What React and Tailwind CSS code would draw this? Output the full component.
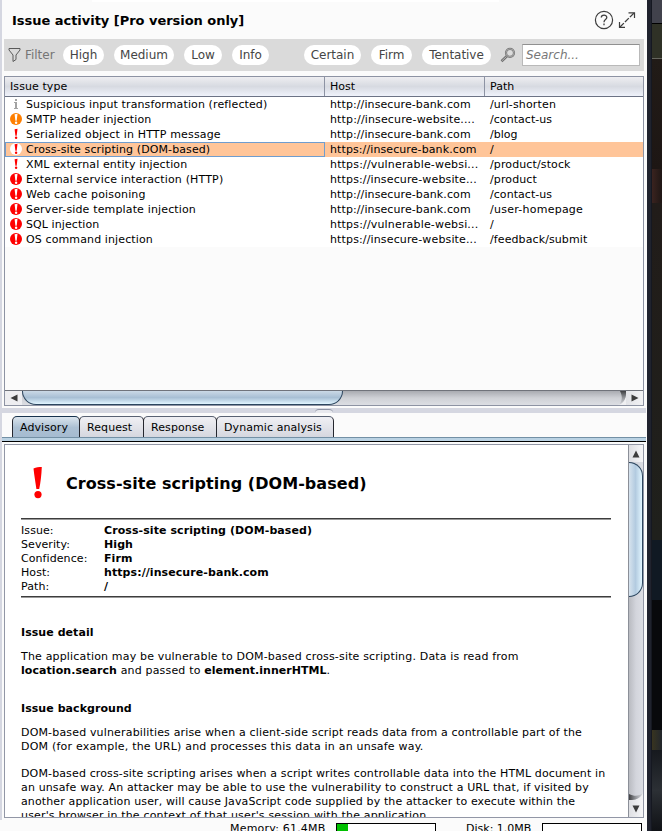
const severityChips = [
  ['High', 'w-[41px]'],
  ['Medium', 'w-[60px]'],
  ['Low', 'w-[38px]'],
  ['Info', 'w-[37px]'],
];
const confidenceChips = [
  ['Certain', 'w-[57px]'],
  ['Firm', 'w-[41px]'],
  ['Tentative', 'w-[69px]'],
];

const rows = [
  ['info', 'Suspicious input transformation (reflected)', 'tracking-[0.12px]', 'http://insecure-bank.com', 'tracking-[0.1px]', '/url-shorten', 'tracking-[0.15px]'],
  ['orange', 'SMTP header injection', 'tracking-[0.14px]', 'http://insecure-website....', 'tracking-[0.15px]', '/contact-us', 'tracking-[0.05px]'],
  ['plain', 'Serialized object in HTTP message', 'tracking-[0.17px]', 'http://insecure-bank.com', 'tracking-[0.1px]', '/blog', 'tracking-normal'],
  ['white', 'Cross-site scripting (DOM-based)', 'tracking-[0.1px]', 'https://insecure-bank.com', 'tracking-[0.1px]', '/', 'tracking-normal'],
  ['plain', 'XML external entity injection', 'tracking-[0.12px]', 'https://vulnerable-websi...', 'tracking-[0.17px]', '/product/stock', 'tracking-[0.12px]'],
  ['red', 'External service interaction (HTTP)', 'tracking-[0.16px]', 'https://insecure-website...', 'tracking-[0.14px]', '/product', 'tracking-[0.12px]'],
  ['red', 'Web cache poisoning', 'tracking-[0.15px]', 'http://insecure-bank.com', 'tracking-[0.1px]', '/contact-us', 'tracking-[0.05px]'],
  ['red', 'Server-side template injection', 'tracking-[0.15px]', 'http://insecure-bank.com', 'tracking-[0.1px]', '/user-homepage', 'tracking-[0.25px]'],
  ['red', 'SQL injection', 'tracking-[0.08px]', 'https://vulnerable-websi...', 'tracking-[0.17px]', '/', 'tracking-normal'],
  ['red', 'OS command injection', 'tracking-[0.12px]', 'https://insecure-website...', 'tracking-[0.14px]', '/feedback/submit', 'tracking-[0.1px]'],
];

const details = [
  ['Issue:', 'Cross-site scripting (DOM-based)'],
  ['Severity:', 'High'],
  ['Confidence:', 'Firm'],
  ['Host:', 'https://insecure-bank.com'],
  ['Path:', '/'],
];

const disc = { orange: '#ff7f00', red: '#ff0000', white: '#ffffff' };

function SeverityIcon({ kind }) {
  if (kind === 'info') {
    return (
      <svg width="12" height="12" viewBox="0 0 12 12" className="shrink-0">
        <path d="M5 1h2v2H5zM4 4h3v6h1v1H4v-1h1V5H4z" fill="#a3a3a3" />
      </svg>
    );
  }
  const mark = kind === 'plain' || kind === 'white' ? '#ff0000' : '#ffffff';
  return (
    <svg width="12" height="12" viewBox="0 0 12 12" className="shrink-0">
      {disc[kind] && <circle cx="6" cy="6" r="6" fill={disc[kind]} />}
      <path d="M4.6 1.2L7.5 0.8L6.7 7.8H5.4z" fill={mark} />
      <circle cx="6.1" cy="9.8" r="1.2" fill={mark} />
    </svg>
  );
}

function Chip({ label, width }) {
  return (
    <span className={'flex h-5 items-center justify-center rounded-full bg-white tracking-[-0.03px] ' + width}>{label}</span>
  );
}

function Arrow({ d }) {
  return (
    <svg width="8" height="8" viewBox="0 0 8 8" className="shrink-0">
      <path d={d} fill="#3c3c3c" />
    </svg>
  );
}

function Tab({ label, active, width }) {
  return (
    <div
      className={
        'h-[22px] rounded-t-[5px] border border-[#25272f] pt-[4px] pl-[7px] tracking-[0.08px] whitespace-nowrap ' +
        width +
        (active
          ? ' border-b-0 bg-linear-to-b from-[#dbe5ed] via-[#abc0d3] to-[#a5bbd0] border-t-[#17334d]'
          : ' -ml-px bg-linear-to-b from-[#f0f0f4] to-[#d5d7df] border-t-[#596273]')
      }
    >
      {label}
    </div>
  );
}

function FilterBar() {
  return (
    <div className="mr-[3px] ml-0.5 flex h-8 shrink-0 items-center bg-[#dadada] pl-1 text-[12px] text-[#454545]">
      <svg width="13" height="16" viewBox="0 0 13 16" className="mr-[4px]">
        <path d="M1 1.5h11v1.5L8 8v4.5L5 14.5V8L1 3z" fill="none" stroke="#5a5a5a" strokeWidth="1" />
      </svg>
      <span className="w-[38px] tracking-[-0.03px] text-[#757575]">Filter</span>
      <div className="flex gap-[10px]">
        {severityChips.map(([label, width]) => (
          <Chip key={label} label={label} width={width} />
        ))}
      </div>
      <div className="ml-[35px] flex gap-[10px]">
        {confidenceChips.map(([label, width]) => (
          <Chip key={label} label={label} width={width} />
        ))}
      </div>
      <svg width="16" height="16" viewBox="0 0 16 16" className="ml-[9px]">
        <path d="M7.5 8.5L1.5 14.2" stroke="#6f6f6f" strokeWidth="2.6" />
        <path d="M7.2 8.8L1.8 13.9" stroke="#c8c8c8" strokeWidth="0.8" />
        <circle cx="10" cy="5.8" r="4" fill="#dcdcdc" stroke="#777" strokeWidth="2.2" />
        <circle cx="10" cy="5.8" r="4" fill="none" stroke="#b8b8b8" strokeWidth="0.7" />
      </svg>
      <div className="ml-[6px] flex h-[22px] w-[118px] items-center border border-[#b9b9b9] border-t-[#909090] bg-white pl-[3px] text-[#777] italic">
        Search...
      </div>
    </div>
  );
}

function IssueTable() {
  return (
    <div className="mt-[5px] mr-[3px] ml-0.5 flex h-[330px] shrink-0 flex-col border border-[#8d93a3] bg-[#fbfbfb]">
      <div className="flex h-5 shrink-0 items-center border-b border-[#6c7385] bg-linear-to-b from-[#eeeef1] via-[#d7dae1] to-[#eff2fb]">
        <div className="flex h-full w-80 items-center border-r border-[#8d93a3] pl-[5px] tracking-[0.08px]">Issue type</div>
        <div className="flex h-full w-40 items-center border-r border-[#8d93a3] pl-[5px]">Host</div>
        <div className="pl-[5px]">Path</div>
      </div>
      {rows.map(([kind, type, typeTracking, host, hostTracking, path, pathTracking]) => (
        <div key={type} className={'flex h-[15px] shrink-0 ' + (kind === 'white' ? 'bg-[#ffc599]' : 'bg-white')}>
          <div
            className={
              'flex h-full w-80 shrink-0 gap-1 border pl-1 leading-[13px] ' +
              (kind === 'white' ? 'border-[#6f9dcf]' : 'border-transparent')
            }
          >
            <SeverityIcon kind={kind} />
            <span className={'whitespace-nowrap ' + typeTracking}>{type}</span>
          </div>
          <div className={'w-40 shrink-0 pl-[5px] leading-[15px] whitespace-nowrap ' + hostTracking}>{host}</div>
          <div className={'pl-[5px] leading-[15px] whitespace-nowrap ' + pathTracking}>{path}</div>
        </div>
      ))}
      <div className="mt-auto flex h-[15px] border-t border-[#70737b] bg-linear-to-b from-[#a9abb1] via-[#cfd1d6] to-[#dcdee3]">
        <div className="flex w-[17px] items-center justify-center bg-[#eeeef1]">
          <Arrow d="M7.5 0.5v7L0.5 4z" />
        </div>
        <div className="h-[14px] w-[321px] rounded-b-[14px] border border-t-0 border-[#2c465f] bg-linear-to-b from-[#cbd9e6] via-[#a8bfd4] to-[#e1f5ff]" />
        <svg width="8" height="14" viewBox="0 0 8 14" className="ml-auto">
          <defs>
            <linearGradient id="trackEnd" x1="0" y1="0" x2="0" y2="1">
              <stop offset="0" stopColor="#3f4043" />
              <stop offset="0.5" stopColor="#96989d" />
              <stop offset="1" stopColor="#dcdee3" />
            </linearGradient>
          </defs>
          <path d="M8 0v3C8 9 4 13 0 14h8z" fill="#f0f0f2" />
          <path d="M2 0h6v3C8 8 5 12 1 14C4 10 5 6 2 0z" fill="url(#trackEnd)" />
        </svg>
        <div className="flex w-[17px] items-center justify-center bg-linear-to-r from-[#e2e3e7] to-[#f2f2f4]">
          <Arrow d="M0.5 0.5v7l7-3.5z" />
        </div>
      </div>
    </div>
  );
}

function Advisory() {
  return (
    <div className="mt-[2px] mr-[3px] ml-0.5 flex h-[374px] shrink-0 border border-[#9297a6] bg-white">
      <div className="w-[623px] overflow-hidden pl-4">
        <div className="flex h-[73px] items-center">
          <svg width="45" height="34" viewBox="0 0 45 34" className="shrink-0">
            <path d="M12.5 3.5C15 2.2 18 2 20.8 2C20.5 10 19.5 18 18.2 24H15.4C14.4 17 13.2 10 12.5 3.5z" fill="#ff0000" />
            <circle cx="17" cy="29.6" r="3.6" fill="#ff0000" />
          </svg>
          <h1 className="pt-1 text-[16px] font-bold tracking-[0.05px] whitespace-nowrap">Cross-site scripting (DOM-based)</h1>
        </div>
        <div className="w-[590px] border-t border-b border-t-[#3d3d3d] border-b-[#999]" />
        <div className="mt-[4px] h-[72px]">
          {details.map(([k, v]) => (
            <div key={k} className="flex h-[14px] items-center tracking-[0.08px]">
              <span className="w-[83px]">{k}</span>
              <b>{v}</b>
            </div>
          ))}
        </div>
        <div className="w-[590px] border-t border-b border-t-[#3d3d3d] border-b-[#999]" />
        <div className="leading-[14px] whitespace-nowrap">
          <h2 className="mt-[28px] font-bold tracking-[0.06px]">Issue detail</h2>
          <p className="mt-[10px]">
            <span className="tracking-[0.17px]">
              The application may be vulnerable to DOM-based cross-site scripting. Data is read from
            </span>
            <br />
            <b className="tracking-[0.06px]">location.search</b>
            <span className="tracking-[0.17px]"> and passed to </span>
            <b className="tracking-[0.02px]">element.innerHTML</b>.
          </p>
          <h2 className="mt-[24px] font-bold tracking-[0.06px]">Issue background</h2>
          <p className="mt-[10px]">
            <span className="tracking-[0.165px]">
              DOM-based vulnerabilities arise when a client-side script reads data from a controllable part of the
            </span>
            <br />
            <span className="tracking-[0.21px]">
              DOM (for example, the URL) and processes this data in an unsafe way.
            </span>
          </p>
          <p className="mt-[13px]">
            <span className="tracking-[0.135px]">
              DOM-based cross-site scripting arises when a script writes controllable data into the HTML document in
            </span>
            <br />
            <span className="tracking-[0.14px]">
              an unsafe way. An attacker may be able to use the vulnerability to construct a URL that, if visited by
            </span>
            <br />
            <span className="tracking-[0.125px]">
              another application user, will cause JavaScript code supplied by the attacker to execute within the
            </span>
            <br />
            <span className="tracking-[0.165px]">
              user's browser in the context of that user's session with the application.
            </span>
          </p>
        </div>
      </div>
      <div className="flex w-[15px] flex-col border-l border-[#8b8f98] bg-linear-to-r from-[#b9bbc1] via-[#d3d5dc] to-[#dcdee4]">
        <div className="flex h-[17px] items-center justify-center bg-linear-to-r from-[#dedfe3] to-[#f6f6f8]">
          <Arrow d="M0.5 7.5h7L4 0.5z" />
        </div>
        <div className="h-[135px] w-[14px] rounded-r-[14px] border border-l-0 border-[#2c465f] bg-linear-to-r from-[#d7e3ee] via-[#b3cbe0] to-[#e1f5ff]" />
        <svg width="14" height="8" viewBox="0 0 14 8" className="mt-auto">
          <defs>
            <linearGradient id="trackBottom" x1="0" y1="0" x2="1" y2="0">
              <stop offset="0" stopColor="#3f4043" />
              <stop offset="0.5" stopColor="#96989d" />
              <stop offset="1" stopColor="#dcdee3" />
            </linearGradient>
          </defs>
          <path d="M0 8h3C9 8 13 4 14 0v8z" fill="#f0f0f2" />
          <path d="M0 2v6h3C8 8 12 5 14 1C10 4 6 5 0 2z" fill="url(#trackBottom)" />
        </svg>
        <div className="flex h-[17px] items-center justify-center bg-linear-to-r from-[#dedfe3] to-[#f6f6f8]">
          <Arrow d="M0.5 0.5h7L4 7.5z" />
        </div>
      </div>
    </div>
  );
}

export default function App() {
  return (
    <div className="flex h-[831px] w-[662px] overflow-hidden bg-[#fbfbfb] font-['DejaVu_Sans',sans-serif] text-[11px] leading-[14px] text-black">
      <div className="h-[820px] w-0.5 shrink-0 bg-[#d5d7e1]" />
      <div className="flex w-[645px] shrink-0 flex-col">
        <div className="ml-[90px] h-0.5 w-[407px] shrink-0 bg-white" />
        <div className="flex h-[37px] shrink-0 items-center pr-[11px] pl-[10px]">
          <h1 className="pt-px text-[13px] font-bold tracking-[-0.03px] whitespace-nowrap">Issue activity [Pro version only]</h1>
          <svg width="42" height="20" viewBox="0 0 42 20" className="mb-px ml-auto">
            <circle cx="10" cy="10" r="8.6" fill="none" stroke="#3d3d3d" strokeWidth="1.2" />
            <path d="M7.3 7.6C7.3 4.3 12.8 4.3 12.8 7.4C12.8 9.6 10 9.6 10 12.2M10 13.5v1.8" fill="none" stroke="#3d3d3d" strokeWidth="1.3" />
            <path d="M26 17L40 3" stroke="#3d3d3d" strokeWidth="1.3" strokeDasharray="5.5 1.5" />
            <path d="M34.5 2.8H40.5V8M25.5 12V17.3H31" fill="none" stroke="#3d3d3d" strokeWidth="1.2" />
          </svg>
        </div>
        <FilterBar />
        <IssueTable />
        <div className="mt-[2px] mr-px flex h-[5px] shrink-0 justify-center bg-[#d5d7e1]">
          <div className="mt-px h-1 w-[18px] rounded-t-sm border-t border-[#8d93a3] bg-[#e8e9ee]" />
        </div>
        <div className="mt-[3px] flex h-[22px] shrink-0 pl-[10px]">
          <Tab label="Advisory" active width="w-[68px]" />
          <Tab label="Request" width="w-[65px]" />
          <Tab label="Response" width="w-[74px]" />
          <Tab label="Dynamic analysis" width="w-[118px]" />
        </div>
        <div className="-mt-px mr-px h-[5px] shrink-0 border-t border-b border-t-[#7390a5] border-b-black bg-[#bad2e3]" />
        <Advisory />
        <div className="flex h-[13px] shrink-0 items-start pt-[4px] pl-[228px]">
          <span className="w-[106px] tracking-[0.2px] whitespace-nowrap">Memory: 61.4MB</span>
          <div className="mt-px h-4 w-[100px] border border-black bg-white">
            <div className="h-full w-[11px] bg-[#00c000]" />
          </div>
          <span className="ml-[30px] w-[76px] whitespace-nowrap">Disk: 1.0MB</span>
          <div className="mt-px h-4 w-[100px] border border-black bg-white" />
        </div>
      </div>
      <div className="h-full w-1 shrink-0 bg-[#20232e]" />
      <div className="flex w-[11px] shrink-0 flex-col border-l border-[#151821]">
        <div className="h-[23px] bg-[#41424c]" />
        <div className="h-[36px] border-t border-b border-t-black border-b-[#66665e] bg-[#2f3126]" />
        <div className="h-[110px] bg-linear-to-b from-[#211b17] to-[#1d1614]" />
        <div className="h-[34px] bg-linear-to-r from-[#3a231f] to-[#1f1715]" />
        <div className="h-[337px] bg-linear-to-b from-[#211c19] to-[#1f201c]" />
        <div className="h-[60px] bg-[#101923]" />
        <div className="h-[130px] bg-[#08090c]" />
        <div className="h-[20px] bg-linear-to-r from-[#38341f] to-[#22262b]" />
        <div className="grow bg-linear-to-b from-[#16191e] via-[#2c3035] to-[#101216]" />
      </div>
    </div>
  );
}
